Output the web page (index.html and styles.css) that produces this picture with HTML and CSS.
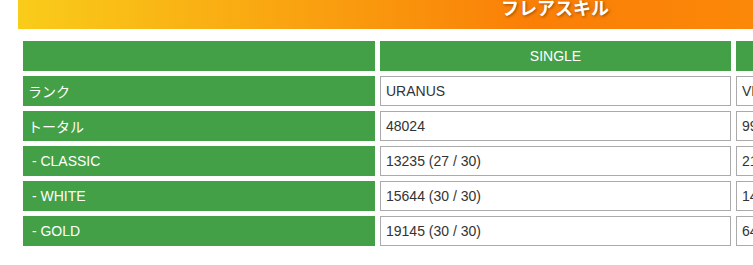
FILE: index.html
```html
<!DOCTYPE html>
<html lang="ja">
<head>
    <meta charset="UTF-8">
    <meta name="viewport" content="width=device-width, initial-scale=1.0">
    <title>フレアスキル</title>
    <link rel="stylesheet" href="styles.css">
</head>
<body>
    <div class="page">
        <!-- 見出し -->
        <h2 class="skill-title">フレアスキル</h2>

        <!-- スキル表 -->
        <table class="skill-table">
            <colgroup>
                <col class="col-label">
                <col class="col-value">
                <col class="col-value">
            </colgroup>
            <tr>
                <th></th>
                <th>SINGLE</th>
                <th>DOUBLE</th>
            </tr>
            <tr>
                <th class="row-label">ランク</th>
                <td>URANUS</td>
                <td>VENUS</td>
            </tr>
            <tr>
                <th class="row-label">トータル</th>
                <td>48024</td>
                <td>9954</td>
            </tr>
            <tr>
                <th class="row-label">&nbsp;- CLASSIC</th>
                <td>13235 (27 / 30)</td>
                <td>2150 (12 / 30)</td>
            </tr>
            <tr>
                <th class="row-label">&nbsp;- WHITE</th>
                <td>15644 (30 / 30)</td>
                <td>1402 (9 / 30)</td>
            </tr>
            <tr>
                <th class="row-label">&nbsp;- GOLD</th>
                <td>19145 (30 / 30)</td>
                <td>6402 (21 / 30)</td>
            </tr>
        </table>
    </div>
</body>
</html>
```

FILE: styles.css
```css
/* 全体 */
body {
    margin: 0;
    font-family: "Liberation Sans", Arial, "Noto Sans CJK JP", sans-serif;
    font-size: 14px;
    color: #333;
    background: #fff;
    overflow-x: hidden;
}

.page {
    width: 1074px;
    padding-left: 18px;
}

/* 見出しバー */
.skill-title {
    margin: 0;
    height: 29px;
    background: linear-gradient(90deg, #f9cc1a 0%, #fa7f07 48%, #fb8607 65%, #fda01c 100%);
    color: #fff;
    font-family: "Noto Sans CJK JP", sans-serif;
    font-size: 18px;
    font-weight: 700;
    line-height: 14px;
    text-align: center;
    text-shadow: 1px 1px 3px rgba(90, 40, 0, 0.6);
    overflow: hidden;
}

/* スキル表 */
.skill-table {
    margin-top: 7px;
    width: 1074px;
    border-spacing: 5px;
    table-layout: fixed;
}
.col-label {
    width: 352px;
}
.col-value {
    width: 351px;
}
.skill-table th,
.skill-table td {
    height: 30px;
    padding: 0 5px;
    box-sizing: border-box;
    font-size: 14px;
    font-weight: normal;
    white-space: nowrap;
}
.skill-table th {
    background: #43a047;
    color: #fff;
    text-align: center;
}
.skill-table th.row-label {
    text-align: left;
}
.skill-table td {
    border: 1px solid #aaa;
    padding-left: 5px;
    text-align: left;
}
```
